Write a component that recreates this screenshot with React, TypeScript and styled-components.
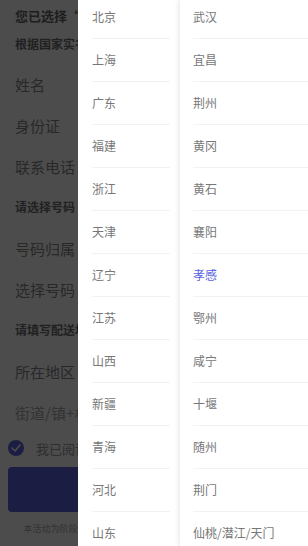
import React, { ReactElement } from 'react';
import styled, { createGlobalStyle } from 'styled-components';

const GlobalStyle = createGlobalStyle`
  * {
    margin: 0;
    padding: 0;
    box-sizing: border-box;
  }
  html, body {
    width: 308px;
    height: 546px;
    overflow: hidden;
    background: #fff;
    font-family: 'Noto Sans CJK SC', 'Noto Sans', sans-serif;
  }
`

const PRIMARY = '#5a62e2'

const Page = styled.div`
  width: 308px;
  height: 546px;
  background: #fff;
  display: flex;
  flex-direction: column;
`

const Header = styled.div`
  height: 32px;
  line-height: 32px;
  padding-left: 15px;
  font-size: 13px;
  font-weight: bold;
  color: #666;
  white-space: nowrap;
  overflow: hidden;
`

const Group = styled.div<{ $top: number }>`
  display: flex;
  flex-direction: column;
  padding-top: ${p => p.$top}px;
`

const Title = styled.div`
  height: 28px;
  line-height: 28px;
  padding-left: 15px;
  font-size: 12px;
  font-weight: bold;
  color: #6e6e6e;
  white-space: nowrap;
  overflow: hidden;
`

const Fields = styled.div`
  display: flex;
  flex-direction: column;
  padding-top: 7px;
`

const Field = styled.div<{ $placeholder?: boolean }>`
  height: 41px;
  line-height: 41px;
  padding-left: 15px;
  font-size: 15px;
  color: ${p => (p.$placeholder ? '#aaa' : '#888')};
  white-space: nowrap;
  overflow: hidden;
`

const AgreeRow = styled.div`
  height: 33px;
  display: flex;
  align-items: center;
  gap: 12px;
  padding-left: 8px;
  font-size: 13px;
  color: #999;
  white-space: nowrap;
`

const CheckCircle = styled.span`
  width: 16px;
  height: 16px;
  border-radius: 50%;
  background: ${PRIMARY};
  display: flex;
  align-items: center;
  justify-content: center;
`

const SubmitButton = styled.button`
  margin: 3px 8px 0;
  height: 48px;
  border: none;
  border-radius: 4px;
  background: ${PRIMARY};
  color: #fff;
  font-size: 16px;
  font-family: inherit;
`

const Notice = styled.div`
  height: 34px;
  line-height: 34px;
  text-align: center;
  font-size: 9px;
  color: #aaa;
  white-space: nowrap;
`

const Overlay = styled.div`
  position: fixed;
  inset: 0;
  background: rgba(0, 0, 0, 0.7);
`

const Drawer = styled.div`
  position: fixed;
  top: 0;
  right: 0;
  bottom: 0;
  width: 230px;
  display: flex;
  background: #fff;
`

const Column = styled.div<{ $main?: boolean }>`
  display: flex;
  flex-direction: column;
  overflow: hidden;
  background: #fff;
  ${p =>
    p.$main
      ? `
    flex: 1;
    padding-left: 13px;
    box-shadow: -2px 0 4px rgba(0, 0, 0, 0.08);
    position: relative;
  `
      : `
    width: 102px;
    padding: 0 10px 0 14px;
  `}
`

const List = styled.div`
  display: flex;
  flex-direction: column;
  margin-top: -4px;
`

const Item = styled.div<{ $active?: boolean }>`
  flex-shrink: 0;
  height: 43px;
  line-height: 42px;
  border-bottom: 1px solid #f2f2f2;
  font-size: 12px;
  color: ${p => (p.$active ? PRIMARY : '#777')};
  white-space: nowrap;
`

const provinces = ['北京', '上海', '广东', '福建', '浙江', '天津', '辽宁', '江苏', '山西', '新疆', '青海', '河北', '山东']
const cities = ['武汉', '宜昌', '荆州', '黄冈', '黄石', '襄阳', '孝感', '鄂州', '咸宁', '十堰', '随州', '荆门', '仙桃/潜江/天门']

export default function App(): ReactElement {
    const selectedCity = '孝感'

    return (
        <>
            <GlobalStyle />
            <Page>
                <Header>您已选择“湖北移动大王卡”</Header>
                <Title>根据国家实名制要求，请准确提供身份证信息</Title>
                <Fields>
                    <Field>姓名</Field>
                    <Field>身份证</Field>
                    <Field>联系电话</Field>
                </Fields>
                <Group $top={6}>
                    <Title>请选择号码</Title>
                    <Fields>
                        <Field>号码归属</Field>
                        <Field>选择号码</Field>
                    </Fields>
                </Group>
                <Group $top={6}>
                    <Title>请填写配送地址</Title>
                    <Fields>
                        <Field>所在地区</Field>
                        <Field $placeholder>街道/镇+村/小区/写字楼+门牌号</Field>
                    </Fields>
                </Group>
                <AgreeRow>
                    <CheckCircle>
                        <svg width="10" height="8" viewBox="0 0 10 8">
                            <path d="M1 4 L4 7 L9 1" stroke="#fff" strokeWidth="1.6" fill="none" strokeLinecap="round" strokeLinejoin="round" />
                        </svg>
                    </CheckCircle>
                    我已阅读并同意《入网协议》
                </AgreeRow>
                <SubmitButton>立即办理</SubmitButton>
                <Notice>本活动为阶段性活动，号卡办理成功后请留意短信通知及快递信息</Notice>
            </Page>
            <Overlay />
            <Drawer>
                <Column>
                    <List>
                        {provinces.map(name => (
                            <Item key={name}>{name}</Item>
                        ))}
                    </List>
                </Column>
                <Column $main>
                    <List>
                        {cities.map(name => (
                            <Item key={name} $active={name === selectedCity}>{name}</Item>
                        ))}
                    </List>
                </Column>
            </Drawer>
        </>
    )
}
